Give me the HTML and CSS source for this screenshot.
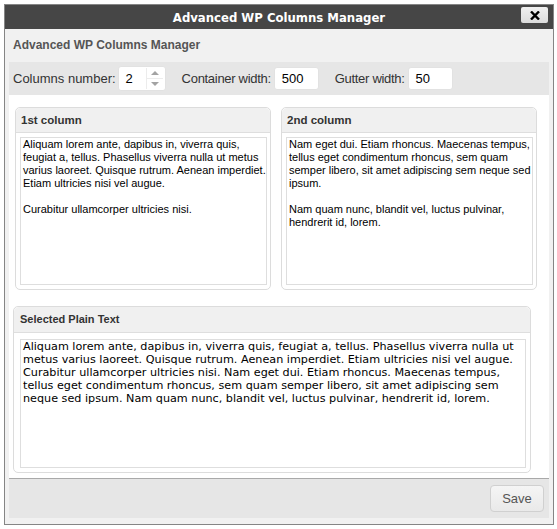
FILE: index.html
```html
<!DOCTYPE html>
<html>
<head>
<meta charset="utf-8">
<link rel="stylesheet" href="styles.css">
</head>
<body>
<div class="dialog">
  <div class="titlebar">
    <span class="title">Advanced WP Columns Manager</span>
    <button class="close" aria-label="Close"><svg width="10" height="9" viewBox="0 0 10 9"><path d="M1 0.5 L9 8.5 M9 0.5 L1 8.5" stroke="#000" stroke-width="2.4"/></svg></button>
  </div>
  <div class="subhead">Advanced WP Columns Manager</div>
  <div class="content">
    <div class="settings">
      <label class="field">Columns number:
        <span class="input num"><span class="val">2</span>
          <span class="spin"><span class="up"></span><span class="down"></span></span>
        </span>
      </label>
      <label class="field"><span class="tight">Container width:</span><span class="input w44"><span class="val">500</span></span></label>
      <label class="field"><span class="tight">Gutter width:</span><span class="input w44"><span class="val">50</span></span></label>
    </div>
    <div class="main">
      <div class="cols">
        <div class="panel col">
          <div class="phead">1st column</div>
          <div class="area">Aliquam lorem ante, dapibus in, viverra quis,<br>feugiat a, tellus. Phasellus viverra nulla ut metus<br>varius laoreet. Quisque rutrum. Aenean imperdiet.<br>Etiam ultricies nisi vel augue.<br><br>Curabitur ullamcorper ultricies nisi.</div>
        </div>
        <div class="panel col">
          <div class="phead">2nd column</div>
          <div class="area">Nam eget dui. Etiam rhoncus. Maecenas tempus,<br>tellus eget condimentum rhoncus, sem quam<br>semper libero, sit amet adipiscing sem neque sed<br>ipsum.<br><br>Nam quam nunc, blandit vel, luctus pulvinar,<br>hendrerit id, lorem.</div>
        </div>
      </div>
      <div class="panel plain">
        <div class="phead">Selected Plain Text</div>
        <div class="area mono">Aliquam lorem ante, dapibus in, viverra quis, feugiat a, tellus. Phasellus viverra nulla ut<br>metus varius laoreet. Quisque rutrum. Aenean imperdiet. Etiam ultricies nisi vel augue.<br>Curabitur ullamcorper ultricies nisi. Nam eget dui. Etiam rhoncus. Maecenas tempus,<br>tellus eget condimentum rhoncus, sem quam semper libero, sit amet adipiscing sem<br>neque sed ipsum. Nam quam nunc, blandit vel, luctus pulvinar, hendrerit id, lorem.</div>
      </div>
    </div>
    <div class="footer">
      <button class="save">Save</button>
    </div>
  </div>
</div>
</body>
</html>
```
FILE: styles.css
```css
html, body { margin: 0; padding: 0; background: #fff; }
body { padding: 4px 0 0 4px; font-family: "Liberation Sans", Arial, sans-serif; }
.dialog {
  width: 548px; height: 519px;
  border: 1px solid #858585;
  background: #f1f1f1;
  display: flex; flex-direction: column;
}
.titlebar {
  height: 24px; background: #464646;
  display: flex; align-items: center; justify-content: center;
  position: relative;
}
.title {
  color: #fff; font-family: "DejaVu Sans", Verdana, sans-serif; font-weight: bold; font-size: 11.7px;
  padding-top: 1px;
}
.close {
  position: absolute; right: 5px; top: 2px;
  width: 27px; height: 16px; padding: 0; border: 0; border-radius: 2px;
  background: linear-gradient(#f0f0f0, #dcdcdc);
  display: flex; align-items: center; justify-content: center;
}
.subhead {
  height: 33px; line-height: 33px; padding-left: 8px;
  font-weight: bold; font-size: 12px; color: #555;
}
.content {
  margin: 0 4px 6px 4px; flex: 1;
  display: flex; flex-direction: column;
  background: #fff;
}
.settings {
  height: 33px; background: #e6e6e6;
  display: flex; align-items: center; padding-left: 4px; gap: 16px;
  font-size: 13px; color: #333;
}
.field { display: flex; align-items: center; gap: 2px; }
.tight { letter-spacing: -0.3px; margin-right: 1px; }
.input {
  height: 23px; background: #fff; border: 1px solid #e2e2e2; border-radius: 3px;
  display: flex; align-items: center; box-sizing: border-box; font-size: 13px; color: #000;
}
.input .val { padding-left: 7px; flex: 1; }
.num { width: 48px; height: 25px; }
.w44 { width: 45px; }
.spin { width: 16px; height: 21px; display: flex; flex-direction: column; border-left: 1px solid #ececec; margin-right: 2px; }
.spin span { flex: 1; position: relative; }
.spin .up { border-bottom: 1px solid #ececec; }
.spin .up::after, .spin .down::after {
  content: ""; position: absolute; left: 4px; width: 0; height: 0;
  border-left: 4px solid transparent; border-right: 4px solid transparent;
}
.spin .up::after { top: 3px; border-bottom: 4px solid #a3a3a3; }
.spin .down::after { top: 3px; border-top: 4px solid #a3a3a3; }
.main { flex: 1; padding: 12px 12px 0 6px; display: flex; flex-direction: column; }
.cols { display: flex; gap: 10px; }
.panel {
  border: 1px solid #dcdcdc; border-radius: 5px; background: #fff;
  display: flex; flex-direction: column; box-sizing: border-box;
}
.col { width: 256px; height: 183px; }
.phead {
  height: 24px; line-height: 24px; background: #f0f0f0; border-bottom: 1px solid #dedede;
  border-radius: 5px 5px 0 0; padding-left: 5px;
  font-weight: bold; font-size: 11.5px; color: #333;
}
.area {
  flex: 1; margin: 4px 3px 4px 4px; border: 1px solid #dedede;
  font-size: 11px; line-height: 13px; color: #000; padding: 0 2px;
  white-space: nowrap; overflow: hidden;
}
.plain { width: 518px; height: 167px; margin: 16px 0 0 -2px; }
.plain .phead { padding-left: 6px; height: 25px; line-height: 25px; font-size: 11px; }
.plain .area { margin: 6px 4px 4px 6px; font-family: "DejaVu Sans", Verdana, sans-serif; font-size: 11.2px; padding: 0 2px; }
.footer {
  height: 39px; border-top: 1px solid #a9a9a9; background: #e6e6e6;
  display: flex; align-items: center; justify-content: flex-end; padding-right: 5px;
}
.save {
  width: 54px; height: 27px; border: 1px solid #d0d0d0; border-radius: 4px;
  background: linear-gradient(#f5f5f5, #e9e9e9);
  font-family: "Liberation Sans", Arial, sans-serif; font-size: 13px; color: #555;
}
```
